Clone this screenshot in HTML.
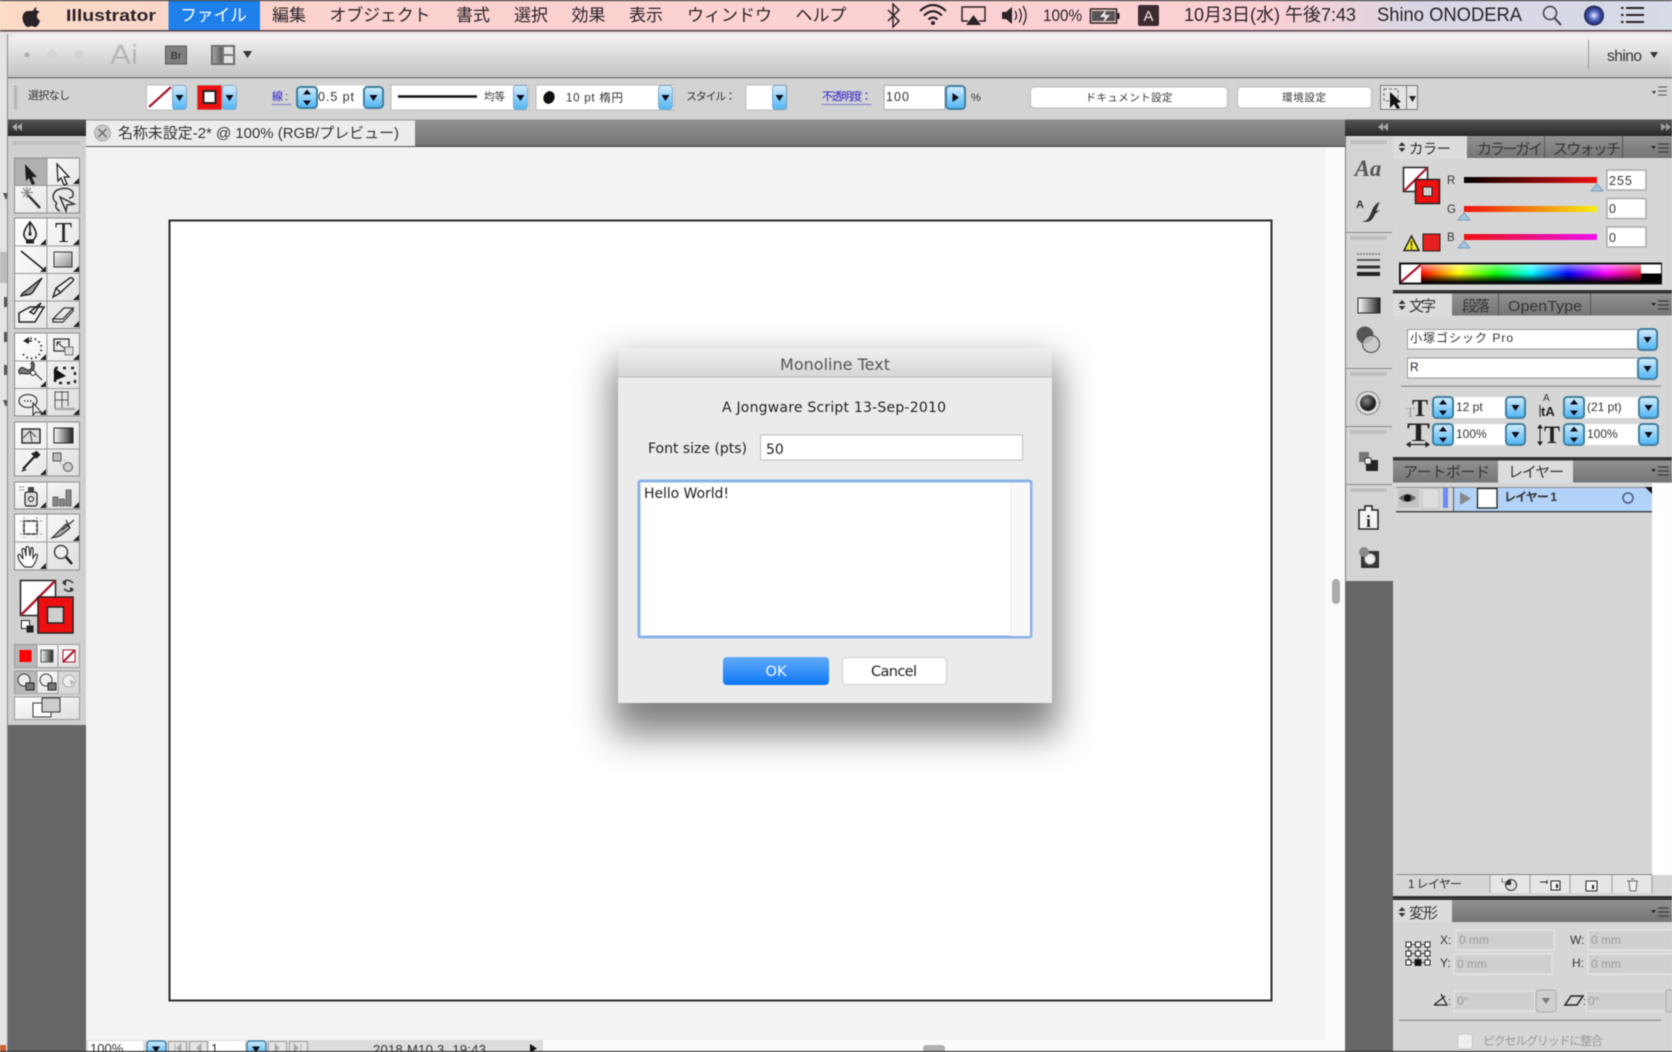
<!DOCTYPE html>
<html lang="ja"><head><meta charset="utf-8"><title>Illustrator</title>
<style>
html,body{margin:0;padding:0;background:#e4e4e4;width:1672px;height:1052px;overflow:hidden}
svg{display:block;filter:blur(.6px)}
text{font-family:"Liberation Sans","Noto Sans CJK JP",sans-serif;fill:#222}
.m{font-size:17px;fill:#2a2226}
.s{font-size:11px;fill:#333}
.f{font-size:12.5px;fill:#333}
.t{font-size:15px;fill:#333}
.tg{font-size:15px;fill:#333}
.d{font-family:"DejaVu Sans",sans-serif;font-size:14px;fill:#222}
.g{font-size:12px;fill:#999}
.l{font-size:12px;fill:#333;font-weight:bold}
.b{fill:#2b22c8;font-size:11px}
</style></head><body>
<svg width="1672" height="1052" viewBox="0 0 1672 1052" xmlns="http://www.w3.org/2000/svg">
<defs>
<linearGradient id="mb" x1="0" x2="1" y1="0" y2="0"><stop offset="0" stop-color="#fcdcc6"/><stop offset=".2" stop-color="#fbd2cf"/><stop offset=".76" stop-color="#fbd0d4"/><stop offset=".84" stop-color="#dcd6e4"/><stop offset="1" stop-color="#d6dbe8"/></linearGradient>
<linearGradient id="tb" x1="0" x2="0" y1="0" y2="1"><stop offset="0" stop-color="#f4f4f4"/><stop offset="1" stop-color="#c2c2c2"/></linearGradient>
<linearGradient id="dk" x1="0" x2="0" y1="0" y2="1"><stop offset="0" stop-color="#555"/><stop offset="1" stop-color="#262626"/></linearGradient>
<linearGradient id="gb" x1="0" x2="0" y1="0" y2="1"><stop offset="0" stop-color="#929292"/><stop offset="1" stop-color="#747474"/></linearGradient>
<linearGradient id="cell" x1="0" x2="1" y1="0" y2="1"><stop offset="0" stop-color="#fff"/><stop offset="1" stop-color="#dedede"/></linearGradient>
<linearGradient id="blue" x1="0" x2="0" y1="0" y2="1"><stop offset="0" stop-color="#d5ecfb"/><stop offset=".5" stop-color="#8fd0f8"/><stop offset="1" stop-color="#4fb4f4"/></linearGradient>
<linearGradient id="sq" x1="0" x2="1" y1="0" y2="1"><stop offset="0" stop-color="#f8f8f8"/><stop offset="1" stop-color="#8c8c8c"/></linearGradient>
<linearGradient id="sqh" x1="0" x2="1" y1="0" y2="0"><stop offset="0" stop-color="#fff"/><stop offset="1" stop-color="#222"/></linearGradient>
<linearGradient id="lay" x1="0" x2="1" y1="0" y2="0"><stop offset="0" stop-color="#a4a4a4"/><stop offset="1" stop-color="#5c5c5c"/></linearGradient>
<linearGradient id="dt" x1="0" x2="0" y1="0" y2="1"><stop offset="0" stop-color="#f0f0f0"/><stop offset="1" stop-color="#d6d6d6"/></linearGradient>
<linearGradient id="ok" x1="0" x2="0" y1="0" y2="1"><stop offset="0" stop-color="#62abf9"/><stop offset="1" stop-color="#0d76f4"/></linearGradient>
<linearGradient id="rr" x1="0" x2="1" y1="0" y2="0"><stop offset="0" stop-color="#000"/><stop offset="1" stop-color="#f01010"/></linearGradient>
<linearGradient id="gg" x1="0" x2="1" y1="0" y2="0"><stop offset="0" stop-color="#f01010"/><stop offset="1" stop-color="#f4f010"/></linearGradient>
<linearGradient id="bb" x1="0" x2="1" y1="0" y2="0"><stop offset="0" stop-color="#f01010"/><stop offset="1" stop-color="#f010f0"/></linearGradient>
<linearGradient id="hue" x1="0" x2="1" y1="0" y2="0"><stop offset="0" stop-color="#f00"/><stop offset=".17" stop-color="#ff0"/><stop offset=".34" stop-color="#0f0"/><stop offset=".5" stop-color="#0ff"/><stop offset=".67" stop-color="#00f"/><stop offset=".84" stop-color="#f0f"/><stop offset="1" stop-color="#e01030"/></linearGradient>
<linearGradient id="shade" x1="0" x2="0" y1="0" y2="1"><stop offset="0" stop-color="#fff" stop-opacity=".55"/><stop offset=".5" stop-color="#fff" stop-opacity="0"/><stop offset=".5" stop-color="#000" stop-opacity="0"/><stop offset="1" stop-color="#000"/></linearGradient>
<radialGradient id="siri"><stop offset="0" stop-color="#e8f0ff"/><stop offset=".5" stop-color="#5060c0"/><stop offset="1" stop-color="#182050"/></radialGradient>
<radialGradient id="ball" cx=".4" cy=".35"><stop offset="0" stop-color="#888"/><stop offset="1" stop-color="#222"/></radialGradient>
<filter id="sh" x="-30%" y="-30%" width="160%" height="160%"><feGaussianBlur stdDeviation="19"/></filter>
<path id="tri" d="M-4,-2.5H4L0,3.5Z" fill="#0b0b18"/>
<g id="dd14"><rect x=".5" y=".5" width="14" height="24" rx="3" fill="url(#blue)" stroke="#7fa8c8"/><use href="#tri" x="7.5" y="12.5"/></g>
<g id="dd20"><rect x="1" y="1" width="19" height="21" rx="3.5" fill="url(#blue)" stroke="#3f7f9f" stroke-width="2"/><use href="#tri" x="10.5" y="11.5"/></g>
<g id="sp"><rect x="1" y="1" width="20" height="21" rx="3.5" fill="url(#blue)" stroke="#3f7f9f" stroke-width="2"/><path d="M11,3.5l4,5h-8zM11,19.5l4,-5h-8z" fill="#0b0b18"/></g>
<path id="ct" d="M3,-3V3H-3Z" fill="#222"/>
<g id="menu"><path d="M0,-2h5l-2.500,3z" fill="#222"/><path d="M7,-4h11M7,0h11M7,4h11" stroke="#3c3c3c" stroke-width="1.200" fill="none"/></g>
<path id="dbl" d="M0,3 5,-1V7ZM5,3 10,-1V7Z" fill="#aaa"/>
<path id="updn" d="M4,0l3.500,4h-7zM4,10l3.500,-4h-7z" fill="#333"/>
</defs>

<!-- screen -->
<rect width="1672" height="1052" fill="#e4e4e4"/>
<path d="M3,193h6l-3,7z" fill="#555"/><rect x="0" y="252" width="8" height="31" fill="#bbb"/><rect x="4" y="297" width="4" height="10" fill="#555"/><rect x="4" y="332" width="4" height="10" fill="#555"/><rect x="4" y="365" width="4" height="10" fill="#555"/><path d="M3,400h6l-3,7z" fill="#555"/>
<rect x="0" y="1045" width="6" height="7" fill="#cf6030"/>

<!-- menubar -->
<rect width="1672" height="30" fill="url(#mb)"/>
<rect width="1672" height="1" fill="#222"/>
<rect y="30" width="1672" height="1.500" fill="#55424a"/>
<rect y="31.500" width="1672" height="2" fill="#e6dcdc"/>
<path transform="translate(-1.500 0)" d="M38,7c-2,1-3,2-3,4 2,0 3-2 3-4zM30,11c-4,0-6,3-6,7 0,4 3,9 5.500,9 1.500,0 2-1 3.500-1s2,1 3.500,1c2.500,0 4.500-4 5-6.500-4-2-4-7-.5-8.500-1.500-1.500-3-2-4.500-2-1.500,0-2.500,1-3.500,1S31.500,11 30,11z" fill="#2a2226"/>
<text x="66" y="21" class="m" style="font-weight:bold" textLength="90" lengthAdjust="spacingAndGlyphs">Illustrator</text>
<rect x="168.500" y="1" width="91.500" height="29" fill="#1e80ea"/>
<text x="180" y="21" class="m" style="fill:#fff" textLength="67">ファイル</text>
<text x="272" y="21" class="m" textLength="34">編集</text>
<text x="329.500" y="21" class="m" textLength="101">オブジェクト</text>
<text x="456" y="21" class="m" textLength="34">書式</text>
<text x="514" y="21" class="m" textLength="34">選択</text>
<text x="571.500" y="21" class="m" textLength="34">効果</text>
<text x="629" y="21" class="m" textLength="34">表示</text>
<text x="687" y="21" class="m" textLength="85">ウィンドウ</text>
<text x="795.500" y="21" class="m" textLength="51">ヘルプ</text>
<path d="M888,10 899,21 893,27V4L899,10 888,21" fill="none" stroke="#2a2226" stroke-width="1.500"/>
<g fill="none" stroke="#2a2226" stroke-width="2.200"><path d="M920,11Q933,-1 946,11"/><path d="M924,15.500Q933,7 942,15.500"/><path d="M928.500,19.500Q933,15.500 937.500,19.500"/></g><circle cx="933" cy="23" r="2" fill="#2a2226"/>
<path d="M968,21H962V7H985V21H979" fill="none" stroke="#2a2226" stroke-width="1.500"/><path d="M973.500,15 981,25H966Z" fill="#2a2226"/>
<path d="M1002,12h4l6-5V24l-6-5h-4z" fill="#2a2226"/><path d="M1015,11q3,4.500 0,9M1019,8.500q4.500,7 0,14M1023,6q6,9.500 0,19" fill="none" stroke="#2a2226" stroke-width="1.300"/>
<text x="1043" y="21" style="font-size:16.500px;fill:#2a2226" textLength="39" lengthAdjust="spacingAndGlyphs">100%</text>
<rect x="1090.500" y="9" width="26" height="14" fill="none" stroke="#2a2226" stroke-width="1.500"/><rect x="1092" y="11" width="23" height="10" fill="#555"/><rect x="1117" y="13" width="2.500" height="6" fill="#2a2226"/><path d="M1106,9.500 1100,17h5l-2,6 7-8h-5z" fill="#f4e8ea"/>
<rect x="1138" y="5" width="21" height="21" rx="2" fill="#3c2a30"/><text x="1148.500" y="21" text-anchor="middle" style="font-size:15px;fill:#f4e8ea">A</text>
<text x="1184" y="21" class="m" style="font-size:18px" textLength="172" lengthAdjust="spacingAndGlyphs">10月3日(水) 午後7:43</text>
<text x="1377" y="21" class="m" style="font-size:19px" textLength="145" lengthAdjust="spacingAndGlyphs">Shino ONODERA</text>
<circle cx="1550" cy="13" r="6.500" fill="none" stroke="#443a44" stroke-width="1.500"/><path d="M1554.500,18 1561,25" stroke="#443a44" stroke-width="2"/>
<circle cx="1594" cy="15.500" r="10" fill="url(#siri)"/>
<path d="M1626,8h18M1626,15h18M1626,22h18" stroke="#2a2226" stroke-width="2"/><path d="M1621,8h2.500M1621,15h2.500M1621,22h2.500" stroke="#2a2226" stroke-width="2"/>

<!-- window chrome -->
<path d="M8,44q0-10 10-10H1672V78H8Z" fill="url(#tb)"/>
<rect x="7" y="34" width="1" height="1018" fill="#8a8a8a"/>
<rect x="8" y="77" width="1664" height="1.500" fill="#7c7c7c"/>
<circle cx="27" cy="55" r="2.500" fill="#aaa"/><circle cx="52" cy="55" r="5" fill="#d4d4d4"/><circle cx="79" cy="55" r="5" fill="#d4d4d4"/>
<text x="110" y="64" style="font-family:'Liberation Sans',sans-serif;font-size:28px;fill:#b6b6b6" textLength="28" lengthAdjust="spacingAndGlyphs">Ai</text>
<rect x="165.500" y="46" width="21" height="18" fill="#808080" stroke="#555"/><text x="176" y="59" text-anchor="middle" style="font-size:10.500px;fill:#222">Br</text>
<rect x="211.500" y="45.500" width="23" height="19" fill="#777" stroke="#666"/><rect x="213" y="47" width="9" height="16" fill="url(#lay)"/><rect x="224" y="47" width="9" height="7" fill="#e4e4e4"/><rect x="224" y="56" width="9" height="7" fill="#e4e4e4"/>
<path d="M243,51h9l-4.500,7z" fill="#333"/>
<rect x="1588" y="40" width="1" height="29" fill="#999"/>
<text x="1607" y="61" style="font-size:15.500px;fill:#333" textLength="35">shino</text><path d="M1650,52h8l-4,6z" fill="#333"/>

<!-- control bar -->
<rect x="8" y="78.500" width="1664" height="41" fill="#d3d3d3"/>
<path d="M15.500,86V110" stroke="#999" stroke-width="3" stroke-dasharray="1 1"/>
<text x="28" y="99" class="s" textLength="42">選択なし</text>
<rect x="146.500" y="85" width="27" height="25" fill="#fff" stroke="#bbb"/><path d="M149,107 171,87" stroke="#a81830" stroke-width="2.200"/>
<use href="#dd14" x="172" y="85"/>
<rect x="197" y="85" width="25" height="25" fill="#ee1010" stroke="#bbb"/><rect x="203.500" y="91" width="12" height="12" fill="#fff" stroke="#222" stroke-width="2"/>
<use href="#dd14" x="222" y="85"/>
<text x="272" y="100" class="b" textLength="11">線</text><text x="285" y="100" class="s">:</text><path d="M272,104.500H291" stroke="#2b22c8" stroke-width="1" stroke-dasharray="1 1"/>
<rect x="317" y="85.500" width="48" height="23" fill="#fff"/><text x="318" y="101" class="f" textLength="36">0.5 pt</text>
<use href="#sp" x="296" y="86"/>
<use href="#dd20" x="363" y="86"/>
<rect x="391" y="85" width="138" height="25" fill="#fff" stroke="#bbb"/><path d="M398,96.500H477" stroke="#111" stroke-width="2.500"/><text x="484" y="100" class="s" style="font-size:10.500px" textLength="21">均等</text>
<use href="#dd14" x="513" y="85"/>
<rect x="536" y="85" width="138" height="25" fill="#fff" stroke="#bbb"/><ellipse cx="549" cy="97.500" rx="5.500" ry="6.500" fill="#111" transform="rotate(25 549 97.500)"/><text x="566" y="101.500" class="f" style="font-size:11.500px" textLength="57">10 pt 楕円</text>
<use href="#dd14" x="658" y="85"/>
<text x="686" y="100" class="s" textLength="50">スタイル：</text>
<rect x="746" y="85" width="41" height="25" fill="#fff" stroke="#bbb"/><use href="#dd14" x="772" y="85"/>
<text x="822" y="100" class="b" textLength="50">不透明度：</text><path d="M822,104.500H872" stroke="#2b22c8" stroke-dasharray="1 1"/>
<rect x="884" y="85.500" width="61" height="24" fill="#fff" stroke="#aaa"/><text x="886" y="101" class="f" textLength="23">100</text>
<rect x="946" y="86" width="19" height="23" rx="3.500" fill="url(#blue)" stroke="#3f7f9f" stroke-width="2"/><path d="M952.500,93 959,97.500 952.500,102Z" fill="#0b0b18"/>
<text x="971" y="101" class="s" textLength="10">%</text>
<rect x="1030.500" y="87" width="197" height="21" rx="4" fill="#fff" stroke="#bbb"/><text x="1129" y="101" text-anchor="middle" class="s" style="font-size:10.500px" textLength="87">ドキュメント設定</text>
<rect x="1237.500" y="87" width="134" height="21" rx="4" fill="#fff" stroke="#bbb"/><text x="1304" y="101" text-anchor="middle" class="s" style="font-size:10.500px" textLength="44">環境設定</text>
<rect x="1380.500" y="85.500" width="37" height="24" fill="#e4e4e4" stroke="#777"/><path d="M1406.500,85.500V109.500" stroke="#777"/>
<rect x="1384" y="89" width="14" height="12" fill="none" stroke="#666" stroke-dasharray="3 2"/><path d="M1390,92 1390,108 1394,104 1397,109 1400,108 1397,103 1401,102Z" fill="#111"/>
<path d="M1409,96h7l-3.500,6z" fill="#222"/>
<g transform="translate(1652 92)"><path d="M0,-1h4l-2,3z" fill="#333"/><path d="M6,-5h9M6,-1h9M6,3h9" stroke="#555"/></g>

<!-- doc tab band -->
<rect x="86" y="119.500" width="1259" height="27" fill="url(#gb)"/>
<rect x="86" y="145.500" width="1259" height="1.500" fill="#555"/>
<rect x="86" y="120.500" width="329" height="25.500" fill="#ececec"/>
<circle cx="102.500" cy="133" r="8" fill="#c8c8c8" stroke="#aaa"/><path d="M98.500,129 106.500,137M106.500,129 98.500,137" stroke="#666" stroke-width="1.300"/>
<text x="118" y="138" class="tg" textLength="281" lengthAdjust="spacingAndGlyphs">名称未設定-2* @ 100% (RGB/プレビュー)</text>
<rect x="8" y="119.500" width="78" height="17" fill="url(#dk)"/><use href="#dbl" x="12" y="124"/>
<rect x="1345" y="119.500" width="327" height="17" fill="url(#dk)"/><use href="#dbl" x="1378" y="124"/><use href="#dbl" transform="translate(1672 0) scale(-1 1)" x="1" y="124" opacity=".9"/>

<!-- canvas -->
<rect x="86" y="147" width="1259" height="905" fill="#f3f3f3"/>
<rect x="1325" y="147" width="20" height="905" fill="#fbfbfb"/>
<rect x="86" y="1040" width="1259" height="12" fill="#fbfbfb"/>
<rect x="169.500" y="220.500" width="1102" height="780" fill="#fff" stroke="#2b2b2b" stroke-width="2"/>
<rect x="1332" y="579" width="8" height="25" rx="4" fill="#aaa"/>
<rect x="923" y="1045" width="22" height="7" rx="3" fill="#b0b0b0"/>

<!-- left panel -->
<rect x="8" y="136" width="78" height="589" fill="#d0d0d0"/>
<rect x="8" y="725" width="78" height="327" fill="#666"/>
<path d="M13,143H81" stroke="#b0b0b0" stroke-width="4" stroke-dasharray="1 1"/>
<g fill="url(#cell)" stroke="#8a8a8a">
<rect x="14.500" y="158" width="65" height="55"/><rect x="14.500" y="218" width="65" height="110.500"/><rect x="14.500" y="333" width="65" height="83"/><rect x="14.500" y="422" width="65" height="54"/><rect x="14.500" y="482" width="65" height="27"/><rect x="14.500" y="514" width="65" height="56"/>
</g>
<rect x="15" y="158.500" width="32" height="27" fill="#b0b0b0"/>
<g stroke="#999" fill="none"><path d="M47,158V213M15,185.500H79M47,218V328M15,246H79M15,273.500H79M15,301H79M47,333V416M15,361H79M15,388.500H79M47,422V476M15,449H79M47,482V509M47,514V570M15,542H79"/></g>
<!-- tool icons -->
<path d="M25,164 37,177 32,177 35,184 32,185 29,178 26,181Z" fill="#1c1c1c"/>
<path d="M57,164 69,177 64,177 67,184 64,185 61,178 58,181Z" fill="#f8f8f8" stroke="#222" stroke-width="1.300"/>
<g stroke="#333" fill="none" stroke-width="1.300"><path d="M28,195 40,208" stroke-width="2.400"/><path d="M27,187V198M21,192.500H33M23,188 31,197M31,188 23,197" stroke="#888"/></g>
<path d="M57,203c-6-3-5-12 3-14 8-2 14,1 13,6 0,2-2,3-4,3M57,203c-3,3 0,7 3,8M60,197 74,204 67,205 66,211Z" fill="none" stroke="#333" stroke-width="1.500"/>
<path d="M30,222c3,4 7,9 6,14l-2.500,4h-7L24,236c-1-5 3-10 6-14zM30,222V233" fill="#eee" stroke="#222" stroke-width="1.600"/><rect x="26" y="240" width="8" height="3.500" fill="#222"/><circle cx="30" cy="234" r="1.600" fill="#222"/>
<text x="63.500" y="242" text-anchor="middle" style="font-family:'Liberation Serif',serif;font-size:28px;fill:#222">T</text>
<path d="M21,251 43,269" stroke="#222" stroke-width="1.600"/>
<rect x="54" y="252" width="18" height="15" fill="url(#sq)" stroke="#333"/>
<path d="M21,296c1-4 4-4 6-6l15-12-9,14c-2,3-6,3-8,3zM21,296c3-1 4-1 6-2" fill="#999" stroke="#222" stroke-width="1.400"/>
<path d="M53,297 56,288 70,278c2-1 4,1 3,3L60,293ZM53,297 60,293M56,288 61,293" fill="#eee" stroke="#222" stroke-width="1.400"/>
<path d="M19,313 30,307H44L35,322H19ZM30,312l11-9-7,11z" fill="#f4f4f4" stroke="#222" stroke-width="1.500"/>
<path d="M53,319 64,308H73L63,319ZM53,319V322H63L73,311V308" fill="#eee" stroke="#333" stroke-width="1.300"/>
<path d="M26,340a10,10 0 1 1 -3.500,13" fill="none" stroke="#333" stroke-width="2" stroke-dasharray="1.500 3"/><path d="M23,341l6,-4v7z" fill="#222"/><path d="M28,341h4" stroke="#333" stroke-width="1.500"/>
<rect x="54" y="339" width="15" height="12" fill="#eee" stroke="#333" stroke-width="1.300"/><rect x="65" y="347" width="8" height="8" fill="#ddd" stroke="#777"/><path d="M57,342 65,349M57,342h4M57,342v4" stroke="#222" fill="none"/>
<path d="M19,370c4-7 7,3 12,-1 2-3-1-6 1-7 3,0 3,7 0,10-5,4-9,0-12,2 0,0-2-2-1-4zM33,371l9,9" fill="#777" stroke="#333" stroke-width="1.200"/><circle cx="33" cy="373" r="2.500" fill="#fff" stroke="#222"/>
<rect x="55" y="368" width="20" height="15" fill="none" stroke="#222" stroke-width="2.400" stroke-dasharray="3 5"/><path d="M54,368 66,376 54,381Z" fill="#111"/>
<ellipse cx="28" cy="401" rx="9" ry="6.500" fill="none" stroke="#444" stroke-width="1.300"/><path d="M24,401h1.500M27,401h1.500M30,401h1.500" stroke="#444" stroke-width="1.500"/><path d="M33,403 33,415 36,412 42,413Z" fill="#eee" stroke="#222"/>
<path d="M55,391V409M62,391V409M55,392H68M55,400H68M68,391V406" stroke="#555" fill="none"/><path d="M55,409H75" stroke="#aaa" stroke-width="2.500"/>
<rect x="22" y="429" width="18" height="14" fill="#ddd" stroke="#222" stroke-width="1.400"/><path d="M23,438 30,431 36,437M30,431 32,442" stroke="#444" fill="none"/>
<rect x="54" y="428" width="19" height="15" fill="url(#sqh)" stroke="#222"/>
<path d="M23,469 36,455M32,453l5,5" stroke="#222" stroke-width="2.200"/><path d="M21,472l3-4 3,2z" fill="#333"/><rect x="34" y="452" width="6" height="5" fill="#222" transform="rotate(45 37 454)"/>
<rect x="53" y="453" width="8" height="8" fill="#bbb" stroke="#555"/><circle cx="68" cy="467" r="4.500" fill="#ccc" stroke="#555"/><path d="M60,463l3,2M64,460l2,2" stroke="#666" stroke-dasharray="1 2"/>
<rect x="25" y="492" width="12" height="14" rx="2" fill="#ddd" stroke="#222" stroke-width="1.200"/><circle cx="31" cy="499" r="2.500" fill="none" stroke="#222"/><rect x="28" y="487" width="6" height="5" fill="#444"/><path d="M19,487h5M19,490h5" stroke="#555" stroke-dasharray="1 1"/>
<g fill="#888" stroke="#444" stroke-width=".7"><rect x="53" y="497" width="5" height="9"/><rect x="59.500" y="499" width="5" height="7"/><rect x="66" y="490" width="5" height="16"/></g>
<rect x="24" y="521" width="13" height="13" fill="#fff" stroke="#222" stroke-width="1.500"/><path d="M20,521h25M20,534h25M24,517v21M37,517v21" stroke="#888" stroke-dasharray="2 3" fill="none"/>
<path d="M52,538 66,524 70,528 60,536ZM62,530 74,520M66,520 70,528" fill="#aaa" stroke="#333" stroke-width="1.200"/>
<path d="M25,567c-4-3-7-8-7-11 0-2 2-2 3,0l2,3-1-9c0-2 2-2 3,0l1,6 0-8c0-2 2-2 3,0l1,8 1-7c0-2 2-2 2,0v9l2-3c2-2 3,0 2,2-1,4-3,8-5,10z" fill="#fff" stroke="#333" stroke-width="1.200"/>
<circle cx="61" cy="552" r="6.500" fill="#eee" stroke="#444" stroke-width="1.500"/><path d="M66,557 72,564" stroke="#222" stroke-width="2.500"/>
<g id="cts"><use href="#ct" x="76" y="181"/><use href="#ct" x="43" y="242"/><use href="#ct" x="76" y="242"/><use href="#ct" x="43" y="269"/><use href="#ct" x="76" y="269"/><use href="#ct" x="76" y="297"/><use href="#ct" x="76" y="324"/><use href="#ct" x="43" y="357"/><use href="#ct" x="76" y="357"/><use href="#ct" x="43" y="384"/><use href="#ct" x="43" y="412"/><use href="#ct" x="76" y="412"/><use href="#ct" x="43" y="472"/><use href="#ct" x="43" y="505"/><use href="#ct" x="76" y="505"/><use href="#ct" x="76" y="538"/><use href="#ct" x="43" y="566"/></g>
<!-- fill / stroke -->
<rect x="20.500" y="580.500" width="35" height="35" fill="#fff" stroke="#222" stroke-width="1.500"/><path d="M21,615 55,581" stroke="#a81830" stroke-width="2.400"/>
<path d="M63,582q5-4 10,1M73,590q-4,3-9-1" fill="none" stroke="#333" stroke-width="1.500"/><path d="M62,583l4,-3v6zM74,589l-4,3v-5z" fill="#333"/>
<rect x="21.500" y="620.500" width="8" height="8" fill="#fff" stroke="#222"/><rect x="26.500" y="625.500" width="7" height="7" fill="#222"/>
<rect x="38" y="597" width="35" height="36" fill="#ee1010" stroke="#222" stroke-width="1.500"/><rect x="47.500" y="607" width="16" height="16" fill="#cfcfcf" stroke="#222" stroke-width="1.500"/>
<!-- mode rows -->
<rect x="14.500" y="644.500" width="65" height="23" fill="url(#cell)" stroke="#999"/><rect x="15" y="645" width="22" height="22" fill="#b8b8b8"/><path d="M37,645V667M58,645V667" stroke="#999"/>
<rect x="19.500" y="650" width="12" height="12" fill="#f00"/><rect x="41" y="650" width="12" height="12" fill="url(#sqh)" stroke="#555"/><rect x="63" y="650" width="12" height="12" fill="#fff" stroke="#a81830"/><path d="M63,662 75,650" stroke="#a81830" stroke-width="2"/>
<rect x="14.500" y="671" width="65" height="22.500" fill="url(#cell)" stroke="#999"/><rect x="15" y="671.500" width="22" height="22" fill="#b8b8b8"/><rect x="58" y="671.500" width="21" height="22" fill="#d8d8d8"/><path d="M37,671V693M58,671V693" stroke="#999"/>
<circle cx="24" cy="680" r="6" fill="#eee" stroke="#333"/><rect x="26" y="683" width="8" height="7" fill="#777" stroke="#222"/><circle cx="46" cy="680" r="6" fill="#eee" stroke="#333"/><rect x="48" y="683" width="8" height="7" fill="#777" stroke="#222"/><circle cx="69" cy="681" r="6" fill="#eee" stroke="#aaa"/><path d="M70,679l4,3-3,3" fill="#aaa"/>
<rect x="14.500" y="697" width="65" height="22.500" fill="url(#cell)" stroke="#999"/><rect x="33" y="703" width="18" height="14" fill="#fff" stroke="#333"/><rect x="42" y="698" width="18" height="14" fill="#ccc" stroke="#333"/>

<!-- right icon strip -->
<rect x="1345" y="136" width="48" height="445" fill="#d4d4d4"/>
<rect x="1345" y="581" width="48" height="471" fill="#666"/>
<rect x="1345" y="136" width="1" height="445" fill="#777"/>
<path d="M1345,232.500H1392M1345,368.500H1392M1345,426.500H1392M1345,484.500H1392" stroke="#888"/>
<path d="M1351,142H1387M1351,238H1387M1351,374H1387M1351,432H1387M1351,490H1387" stroke="#aaa" stroke-width="4" stroke-dasharray="1 1"/>
<text x="1368" y="176" text-anchor="middle" style="font-family:'Liberation Serif',serif;font-style:italic;font-weight:bold;font-size:23px;fill:#555">Aa</text>
<text x="1356" y="208" style="font-size:11px;fill:#333;font-weight:bold">A</text><path d="M1361,221c6,1 8-3 10-8 2-6 5-10 9-11-2,3-3,7-4,9l4,-1-5,4c-2,5-5,10-14,7z" fill="#333"/>
<path d="M1357,254h23" stroke="#777" stroke-width="1.500" stroke-dasharray="2 1"/><path d="M1357,260h23" stroke="#555" stroke-width="2"/><path d="M1357,267h23" stroke="#333" stroke-width="3"/><path d="M1357,274h23" stroke="#222" stroke-width="4"/>
<rect x="1358" y="298" width="22" height="15" fill="url(#sqh)" stroke="#222"/>
<circle cx="1365" cy="335" r="8.500" fill="#555"/><circle cx="1371" cy="344" r="8.500" fill="#c8c8c8" fill-opacity=".8" stroke="#444"/>
<circle cx="1368" cy="403" r="11.500" fill="#ddd" stroke="#777" stroke-width="1.500" stroke-dasharray="1.500 1"/><circle cx="1368" cy="403" r="8" fill="url(#ball)"/>
<rect x="1359" y="452" width="10" height="10" fill="#777"/><rect x="1366" y="460" width="12" height="11" fill="#222"/><rect x="1365" y="458" width="6" height="6" fill="#eee" stroke="#444"/>
<path d="M1359,510h6v-4h7v4h6v19h-19z" fill="#f4f4f4" stroke="#222" stroke-width="1.500"/><text x="1368.500" y="527" text-anchor="middle" style="font-family:'Liberation Serif',serif;font-weight:bold;font-size:17px">i</text>
<rect x="1361" y="551" width="18" height="17" fill="#333"/><circle cx="1370" cy="559" r="5.500" fill="#eee" stroke="#888"/><circle cx="1364" cy="552" r="5" fill="#888"/>

<!-- panels column -->
<rect x="1393" y="136" width="279" height="916" fill="#d6d6d6"/>
<!-- color -->
<rect x="1393" y="136" width="279" height="22" fill="url(#gb)"/>
<rect x="1393" y="136" width="74" height="23" fill="#dcdcdc"/>
<rect x="1544" y="136" width="1" height="22" fill="#555"/><rect x="1622" y="136" width="1" height="22" fill="#555"/>
<use href="#updn" x="1398" y="142"/>
<text x="1409" y="154" class="t" style="font-size:14.500px" textLength="42">カラー</text>
<text x="1477" y="154" class="t" textLength="66">カラーガイ</text>
<text x="1553" y="154" class="t" textLength="68">スウォッチ</text>
<use href="#menu" x="1651" y="148"/>
<rect x="1403.500" y="167.500" width="24" height="24" fill="#fff" stroke="#222" stroke-width="1.500"/><path d="M1404,191 1427,168" stroke="#a81830" stroke-width="2.200"/>
<rect x="1415.500" y="179.500" width="24" height="24" fill="#ee1010" stroke="#222" stroke-width="1.500"/><rect x="1423" y="187" width="9" height="9" fill="#cfcfcf" stroke="#222"/>
<text x="1447" y="184" class="s" style="font-size:11.500px">R</text><text x="1447" y="213" class="s" style="font-size:11.500px">G</text><text x="1447" y="241" class="s" style="font-size:11.500px">B</text>
<rect x="1464" y="177" width="133" height="6" fill="url(#rr)"/><rect x="1464" y="206" width="133" height="6" fill="url(#gg)"/><rect x="1464" y="234" width="133" height="6" fill="url(#bb)"/>
<path d="M1597,184l6,7h-12zM1464,213l6,7h-12zM1464,241l6,7h-12z" fill="#a6c8e4" stroke="#6c8cac" stroke-width=".8"/>
<g fill="#fff" stroke="#aaa" stroke-width="1.500"><rect x="1607" y="170" width="39" height="20"/><rect x="1607" y="198.500" width="39" height="20"/><rect x="1607" y="227" width="39" height="20"/></g>
<text x="1609" y="185" class="f" textLength="23">255</text><text x="1609" y="213" class="f">0</text><text x="1609" y="242" class="f">0</text>
<path d="M1411.500,236 1419,250.500H1404Z" fill="#f0ea30" stroke="#222" stroke-width="1.500"/><path d="M1411.500,241v5M1411.500,247v2" stroke="#222" stroke-width="1.300"/>
<rect x="1423" y="234" width="17" height="17" fill="#e42020" stroke="#222"/>
<rect x="1399.500" y="263" width="262" height="21" fill="#111" stroke="#111"/>
<rect x="1401" y="264.500" width="20" height="18" fill="#fff"/><path d="M1401,282 1421,264.500" stroke="#a81830" stroke-width="2.200"/>
<rect x="1421" y="264.500" width="220" height="18" fill="url(#hue)"/><rect x="1421" y="264.500" width="220" height="18" fill="url(#shade)"/>
<rect x="1641" y="264.500" width="20" height="9" fill="#fff"/><rect x="1641" y="273.500" width="20" height="9" fill="#000"/>
<rect x="1393" y="290" width="279" height="3.500" fill="#333"/>
<!-- character -->
<rect x="1393" y="293.500" width="279" height="22" fill="url(#gb)"/>
<rect x="1393" y="293.500" width="59" height="23" fill="#dcdcdc"/>
<rect x="1498" y="293.500" width="1" height="22" fill="#555"/><rect x="1590" y="293.500" width="1" height="22" fill="#555"/>
<use href="#updn" x="1398" y="300"/>
<text x="1409" y="311" class="t" textLength="27">文字</text>
<text x="1462" y="311" class="t" textLength="28">段落</text>
<text x="1508" y="311" class="t" textLength="74" lengthAdjust="spacingAndGlyphs">OpenType</text>
<use href="#menu" x="1651" y="305"/>
<rect x="1407.500" y="329.500" width="231" height="19.500" fill="#fff" stroke="#999"/><text x="1410" y="342" class="f" style="font-size:12px" textLength="103">小塚ゴシック Pro</text><use href="#dd20" x="1637" y="328"/>
<rect x="1407.500" y="358" width="231" height="20" fill="#fff" stroke="#999"/><text x="1410" y="371" class="f" style="font-size:12px;fill:#223">R</text><use href="#dd20" x="1637" y="357"/>
<rect x="1401" y="385.500" width="260" height="1.500" fill="#999"/>
<g fill="#fff"><rect x="1454" y="397" width="52" height="21"/><rect x="1585" y="397" width="60" height="21"/><rect x="1454" y="424" width="52" height="21"/><rect x="1585" y="424" width="60" height="21"/></g>
<text x="1456" y="411" class="f" style="font-size:12px">12 pt</text><text x="1587" y="411" class="f" style="font-size:12px">(21 pt)</text><text x="1456" y="438" class="f" style="font-size:12px">100%</text><text x="1587" y="438" class="f" style="font-size:12px">100%</text>
<use href="#sp" x="1432" y="396"/><use href="#dd20" x="1505" y="396"/><use href="#sp" x="1563" y="396"/><use href="#dd20" x="1638" y="396"/>
<use href="#sp" x="1432" y="423"/><use href="#dd20" x="1505" y="423"/><use href="#sp" x="1563" y="423"/><use href="#dd20" x="1638" y="423"/>
<text x="1412" y="416" style="font-family:'Liberation Serif',serif;font-weight:bold;font-size:24px;fill:#222">T</text><text x="1406" y="417" style="font-family:'Liberation Serif',serif;font-size:14px;fill:#999">T</text>
<text x="1407" y="441" style="font-family:'Liberation Serif',serif;font-weight:bold;font-size:26px;fill:#222" textLength="23" lengthAdjust="spacingAndGlyphs">T</text><path d="M1407,444.500H1429M1407,444.500l3,-2v4zM1429,444.500l-3,-2v4z" stroke="#222" stroke-width="1.200" fill="#222"/>
<text x="1543" y="401" style="font-size:10px;fill:#333">A</text><text x="1541" y="416" style="font-weight:bold;font-size:13px;fill:#222">tA</text><path d="M1540,405V417" stroke="#222"/>
<text x="1544" y="443" style="font-family:'Liberation Serif',serif;font-weight:bold;font-size:25px;fill:#222" textLength="16" lengthAdjust="spacingAndGlyphs">T</text><path d="M1540,425V445M1540,425l-2,3h4zM1540,445l-2,-3h4z" stroke="#222" fill="#222"/>
<rect x="1393" y="457" width="279" height="3.500" fill="#333"/>
<!-- layers -->
<rect x="1393" y="460.500" width="279" height="22" fill="url(#gb)"/>
<rect x="1498" y="460.500" width="75" height="22.500" fill="#dcdcdc"/>
<text x="1403" y="477" class="t" textLength="87">アートボード</text>
<text x="1508" y="477" class="t" textLength="56">レイヤー</text>
<use href="#menu" x="1651" y="471"/>
<rect x="1652" y="483" width="20" height="392" fill="#fff"/>
<rect x="1396" y="487" width="57" height="24" fill="#d6d6d6"/><rect x="1396" y="487" width="256" height="1" fill="#888"/>
<rect x="1398" y="489" width="21" height="19" fill="#c4c4c4"/>
<rect x="1454" y="488" width="198" height="23" fill="#b2d2f8"/>
<rect x="1396" y="511" width="256" height="1.500" fill="#444"/><rect x="1453" y="487" width="1" height="24" fill="#555"/>
<path d="M1399,498q8.500,-8 17,0q-8.500,8 -17,0z" fill="#666"/><circle cx="1407.500" cy="498" r="3.500" fill="#111"/>
<rect x="1422" y="488.500" width="17" height="20" fill="#ddd" stroke="#c4c4c4"/><rect x="1443" y="488" width="5" height="20" fill="#6c8cf0"/>
<path d="M1460,492 1471,498.500 1460,505Z" fill="#888"/>
<rect x="1477.500" y="488.500" width="19.500" height="19.500" fill="#fff" stroke="#222" stroke-width="1.300"/>
<text x="1504" y="501" class="l" textLength="53">レイヤー 1</text>
<circle cx="1628" cy="498" r="5" fill="none" stroke="#4a5a7a" stroke-width="1.500"/>
<path d="M1645,487h7v7z" fill="#111"/>
<rect x="1396" y="874" width="256" height="1" fill="#888"/>
<text x="1408" y="888" class="s" style="font-size:12px" textLength="54">1 レイヤー</text>
<rect x="1490" y="875" width="162" height="18" fill="#e6e6e6"/>
<path d="M1490,875V893M1530,875V893M1570,875V893M1612,875V893M1652,875V893" stroke="#999"/>
<circle cx="1511" cy="885" r="5.500" fill="#ddd" stroke="#333"/><path d="M1511,885V879.500A5.500,5.500 0 0 0 1505.500,885Z" fill="#333"/><path d="M1502,878v4h3" fill="none" stroke="#777"/>
<path d="M1540,882h7M1547,880v4" stroke="#222"/><rect x="1551" y="881" width="9" height="9" fill="#f4f4f4" stroke="#222"/><path d="M1557,888V884" stroke="#222" stroke-width="2"/>
<rect x="1586" y="881" width="11" height="10" fill="#f4f4f4" stroke="#222"/><path d="M1593,889V885" stroke="#222" stroke-width="2"/>
<path d="M1627,881h11M1629,881l1,10h6l1-10M1631,879h3" fill="#eee" stroke="#666"/>
<rect x="1393" y="896" width="279" height="4" fill="#333"/>
<!-- transform -->
<rect x="1393" y="900" width="279" height="22" fill="url(#gb)"/>
<rect x="1393" y="900" width="59" height="22.500" fill="#dcdcdc"/>
<use href="#updn" x="1398" y="907"/>
<text x="1409" y="918" class="t" textLength="29">変形</text>
<use href="#menu" x="1651" y="912"/>
<g fill="#cfcfcf" stroke="#e4e4e4" stroke-width="1.500"><rect x="1456" y="930" width="98" height="20"/><rect x="1454" y="954" width="98" height="20"/><rect x="1588" y="930" width="90" height="20"/><rect x="1588" y="954" width="90" height="20"/><rect x="1454" y="991" width="81" height="20"/><rect x="1586" y="991" width="80" height="20"/></g>
<text x="1440" y="944" class="f" style="font-size:12px">X:</text><text x="1440" y="967" class="f" style="font-size:12px">Y:</text><text x="1570" y="944" class="f" style="font-size:12px">W:</text><text x="1572" y="967" class="f" style="font-size:12px">H:</text>
<text x="1459" y="944" class="g">0 mm</text><text x="1457" y="968" class="g">0 mm</text><text x="1591" y="944" class="g">0 mm</text><text x="1591" y="968" class="g">0 mm</text><text x="1457" y="1005" class="g">0°</text><text x="1588" y="1005" class="g">0°</text>
<path d="M1408,944.500H1428M1408,953.500H1428M1408,962.500H1428M1408.500,944V963M1418,944V963M1427.500,944V963" stroke="#444" fill="none"/>
<g fill="#fff" stroke="#222"><rect x="1406" y="942" width="5" height="5"/><rect x="1415.500" y="942" width="5" height="5"/><rect x="1425" y="942" width="5" height="5"/><rect x="1406" y="951" width="5" height="5"/><rect x="1415.500" y="951" width="5" height="5"/><rect x="1425" y="951" width="5" height="5"/><rect x="1406" y="960" width="5" height="5"/><rect x="1425" y="960" width="5" height="5"/><rect x="1415" y="959.500" width="6" height="6" fill="#111"/></g>
<path d="M1434,1005H1447L1441,994M1434,1005 1445,996" fill="none" stroke="#222" stroke-width="1.200"/><text x="1448" y="1005" class="s">:</text>
<rect x="1536" y="990" width="20" height="22" rx="3" fill="#cfcfcf" stroke="#aaa"/><path d="M1542,998h8l-4,6z" fill="#777"/>
<path d="M1565,1005 1571,996H1583L1577,1005Z" fill="none" stroke="#222" stroke-width="1.500"/><text x="1583" y="1005" class="s">:</text>
<rect x="1666" y="990" width="6" height="22" fill="#cfcfcf" stroke="#aaa"/>
<rect x="1399" y="1019.500" width="262" height="1.500" fill="#999"/>
<rect x="1457.500" y="1034" width="15" height="15" rx="3" fill="#eee" stroke="#c4c4c4"/>
<text x="1483" y="1045" class="g" textLength="120">ピクセルグリッドに整合</text>

<!-- status bar -->
<rect x="86" y="1040" width="457" height="12" fill="#dcdcdc"/>
<rect x="88" y="1041" width="55" height="11" fill="#fff"/><text x="90" y="1053" style="font-size:13px;fill:#333">100%</text>
<rect x="147" y="1041" width="19" height="14" rx="3" fill="url(#blue)" stroke="#3f7f9f" stroke-width="1.500"/><use href="#tri" x="156" y="1049"/>
<g fill="#e4e4e4" stroke="#999"><rect x="168.500" y="1041.500" width="18" height="12"/><rect x="189.500" y="1041.500" width="18" height="12"/><rect x="268.500" y="1041.500" width="18" height="12"/><rect x="289.500" y="1041.500" width="18" height="12"/></g>
<path d="M175,1044v8M181,1044l-4,4 4,4zM201,1044l-4,4 4,4zM275,1044l4,4-4,4zM294,1044l4,4-4,4zM301,1044v8" stroke="#aaa" fill="#aaa"/>
<rect x="209" y="1041" width="36" height="11" fill="#fff"/><text x="211" y="1053" style="font-size:13px;fill:#333">1</text>
<rect x="247" y="1041" width="19" height="14" rx="3" fill="url(#blue)" stroke="#3f7f9f" stroke-width="1.500"/><use href="#tri" x="256" y="1049"/>
<text x="373" y="1054" style="font-size:13px;fill:#333" textLength="113">2018 M10 3, 19:43</text>
<path d="M530,1044 537,1048.500 530,1053Z" fill="#111"/>

<!-- dialog -->
<rect x="612" y="362" width="446" height="372" fill="#000" opacity=".5" filter="url(#sh)"/>
<path d="M618,352q0-4 4-4H1048q4,0 4,4V703H618Z" fill="#ebebeb"/>
<path d="M618,352q0-4 4-4H1048q4,0 4,4V377H618Z" fill="url(#dt)"/>
<rect x="618" y="376.500" width="434" height="1" fill="#bcbcbc"/>
<text x="835" y="370" text-anchor="middle" style="font-family:'DejaVu Sans',sans-serif;font-size:16px;fill:#555" textLength="110">Monoline Text</text>
<text x="722" y="412" class="d" textLength="224">A Jongware Script 13-Sep-2010</text>
<text x="648" y="453" class="d" textLength="99">Font size (pts)</text>
<rect x="760.500" y="435" width="262" height="25" fill="#fff" stroke="#bcbcbc"/>
<text x="766" y="454" class="d">50</text>
<rect x="639" y="481" width="392" height="156" rx="1.500" fill="#fff" stroke="#8ab2e8" stroke-width="3"/>
<rect x="1011" y="483" width="19" height="153" fill="#f8f8f8"/><rect x="1010.500" y="483" width="1" height="153" fill="#e8e8e8"/>
<text x="644" y="498" class="d" textLength="85">Hello World!</text>
<rect x="723" y="657" width="106" height="28" rx="4" fill="url(#ok)"/>
<text x="776" y="676" text-anchor="middle" class="d" style="fill:#f4f8ff;font-size:14.500px">OK</text>
<rect x="842.500" y="657.500" width="104" height="27" rx="4" fill="#fff" stroke="#ccc"/>
<text x="894" y="676" text-anchor="middle" class="d" style="font-size:14.500px" textLength="46">Cancel</text>

<rect y="1051" width="1672" height="1" fill="#111"/>
</svg>
</body></html>
